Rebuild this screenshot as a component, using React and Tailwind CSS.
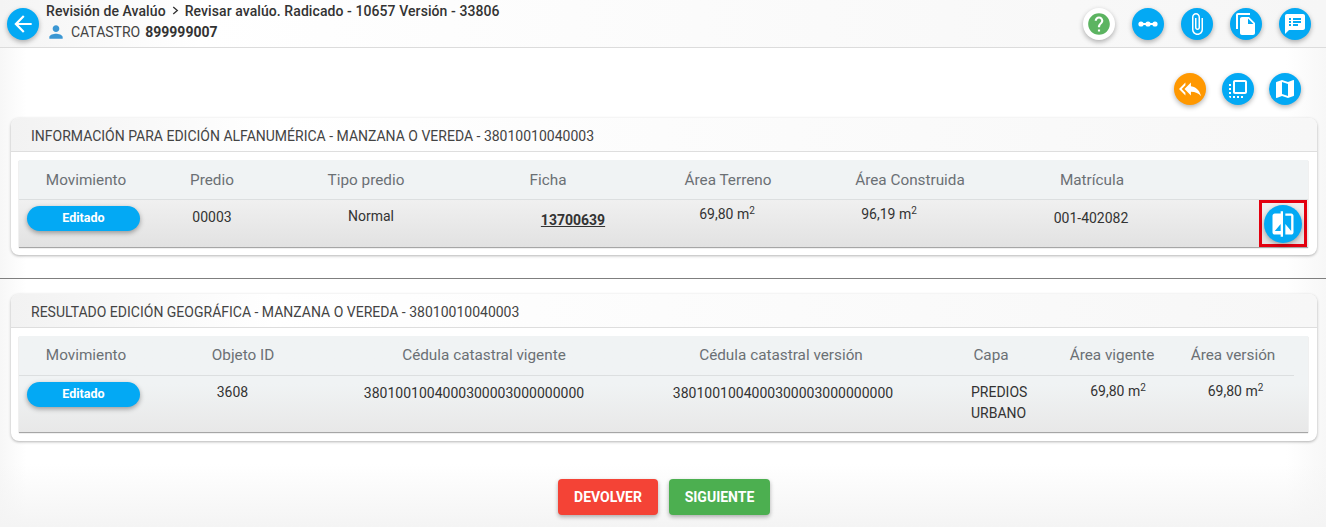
import React from "react";

const P = {
  back: "M20 11H7.83l5.59-5.59L12 4l-8 8 8 8 1.41-1.41L7.83 13H20v-2z",
  person: "M12 12c2.21 0 4-1.79 4-4s-1.79-4-4-4-4 1.79-4 4 1.79 4 4 4zm0 2c-2.67 0-8 1.34-8 4v2h16v-2c0-2.66-5.33-4-8-4z",
  attach: "M16.5 6v11.5c0 2.21-1.79 4-4 4s-4-1.79-4-4V5c0-1.38 1.12-2.5 2.5-2.5s2.5 1.12 2.5 2.5v10.5c0 .55-.45 1-1 1s-1-.45-1-1V6H10v9.5c0 1.38 1.12 2.5 2.5 2.5s2.5-1.12 2.5-2.5V5c0-2.21-1.79-4-4-4S7 2.79 7 5v12.5c0 3.04 2.46 5.5 5.5 5.5s5.5-2.46 5.5-5.5V6h-1.5z",
  copy: "M16 1H4c-1.1 0-2 .9-2 2v14h2V3h12V1zm-1 4l6 6v10c0 1.1-.9 2-2 2H7.99C6.89 23 6 22.1 6 21l.01-14c0-1.1.89-2 1.99-2h7zm-1 7h5.5L14 6.5V12z",
  notes: "M20 2H4c-1.1 0-1.99.9-1.99 2L2 22l4-4h14c1.1 0 2-.9 2-2V4c0-1.1-.9-2-2-2zM8 14H6v-2h2v2zm0-3H6V9h2v2zm0-3H6V6h2v2zm7 6h-5v-2h5v2zm3-3h-8V9h8v2zm0-3h-8V6h8v2z",
  replyAll: "M7 8V5l-7 7 7 7v-3l-4-4 4-4zm6 1V5l-7 7 7 7v-4.1c5 0 8.5 1.6 11 5.1-1-5-4-10-11-11z",
  flip: "M3 13h2v-2H3v2zm0 4h2v-2H3v2zm2 4v-2H3c0 1.1.89 2 2 2zM3 9h2V7H3v2zm12 12h2v-2h-2v2zm4-18H9c-1.11 0-2 .9-2 2v10c0 1.1.89 2 2 2h10c1.1 0 2-.9 2-2V5c0-1.1-.9-2-2-2zm0 12H9V5h10v10zm-8 6h2v-2h-2v2zm-4 0h2v-2H7v2z",
  map: "M20.5 3l-.16.03L15 5.1 9 3 3.36 4.9c-.21.07-.36.25-.36.48V20.5c0 .28.22.5.5.5l.16-.03L9 18.9l6 2.1 5.64-1.9c.21-.07.36-.25.36-.48V3.5c0-.28-.22-.5-.5-.5zM15 19l-6-2.11V5l6 2.11V19z",
  compare: "M10 3H5c-1.1 0-2 .9-2 2v14c0 1.1.9 2 2 2h5v2h2V1h-2v2zm0 15H5l5-6v6zm9-15h-5v2h5v13l-5-6v9h5c1.1 0 2-.9 2-2V5c0-1.1-.9-2-2-2z",
  help: "M12 2C6.48 2 2 6.48 2 12s4.48 10 10 10 10-4.48 10-10S17.52 2 12 2zm1 17h-2v-2h2v2zm2.07-7.75l-.9.92C13.45 12.9 13 13.5 13 15h-2v-.5c0-1.1.45-2.1 1.17-2.83l1.24-1.26c.37-.36.59-.86.59-1.41 0-1.1-.9-2-2-2s-2 .9-2 2H8c0-2.21 1.79-4 4-4s4 1.79 4 4c0 .88-.36 1.68-.93 2.25z",
};

function Icon({ d, className }) {
  return (
    <svg viewBox="0 0 24 24" className={className} fill="currentColor">
      <path d={d} />
    </svg>
  );
}

function Fab({ children, className = "h-8 w-8 bg-[#03a9f4] text-white" }) {
  return (
    <button className={"flex shrink-0 items-center justify-center rounded-full shadow-[0_2px_5px_rgba(0,0,0,0.3)] " + className}>
      {children}
    </button>
  );
}

function Sup({ value }) {
  return (
    <span>
      {value} m<sup className="text-[10px]">2</sup>
    </span>
  );
}

function Pill() {
  return (
    <button className="flex h-[25px] w-[113px] items-center justify-center rounded-full bg-[#03a9f4] text-[12.5px] font-bold text-white shadow-[0_2px_5px_rgba(0,0,0,0.35)]">
      Editado
    </button>
  );
}

function Card({ title, children, className = "" }) {
  return (
    <section className={"ml-[11px] mr-[9px] shrink-0 rounded-[8px] bg-white shadow-[0_1px_3px_rgba(0,0,0,0.3)] " + className}>
      <h2 className="flex h-[34px] items-center rounded-t-[8px] border-b border-[#dedede] bg-gradient-to-r from-[#f2f2f2] via-white via-20% to-[#f7f7f7] pl-5 pt-[3px] text-[14px] font-normal text-[#444]">
        {title}
      </h2>
      <div className="pb-2 pl-2 pr-[9px] pt-2">{children}</div>
    </section>
  );
}

export default function App() {
  return (
    <div className="flex h-[527px] w-[1326px] flex-col overflow-hidden bg-[linear-gradient(to_bottom,transparent_88%,#f4f4f4_100%),linear-gradient(to_right,#f7f7f7,#ffffff_2%,#ffffff_97%,#f7f7f7)] font-['Roboto',sans-serif] text-[14px]">
      <header className="flex h-12 shrink-0 items-center border-b border-[#dcdcdc] bg-gradient-to-r from-[#f4f4f4] via-white via-15% to-[#f6f6f6] pl-[7px] pr-[15px]">
        <Fab><Icon d={P.back} className="h-[26px] w-[26px]" /></Fab>
        <div className="ml-[7px] mt-[-5px] flex flex-col text-[#333]">
          <div className="flex h-5 items-center text-[14px] font-medium leading-5 tracking-[0.08px] text-[#333]">
            <span>Revisión de Avalúo</span>
            <svg viewBox="0 0 10 10" className="mx-[5px] h-[9px] w-[9px]" fill="none" stroke="currentColor" strokeWidth="1.5"><path d="M2.5 1 L7 5 L2.5 9" /></svg>
            <span>Revisar avalúo. Radicado - 10657 Versión - 33806</span>
          </div>
          <div className="mt-[1px] flex h-5 items-center text-[14px] leading-5">
            <Icon d={P.person} className="h-5 w-5 text-[#3b97d3]" />
            <span className="ml-[5px] text-[#444]">CATASTRO</span>
            <span className="ml-[5px] font-bold text-[#333]">899999007</span>
          </div>
        </div>
        <div className="ml-auto flex gap-[17px]">
          <Fab className="h-8 w-8 bg-white text-[#5cb461]"><Icon d={P.help} className="h-[26px] w-[26px]" /></Fab>
          <Fab>
            <svg viewBox="0 0 24 24" className="h-[24px] w-[24px]" fill="currentColor">
              <rect x="4" y="11" width="16" height="2" />
              <circle cx="5" cy="12" r="2.6" />
              <circle cx="12" cy="12" r="2.6" />
              <circle cx="19" cy="12" r="2.6" />
            </svg>
          </Fab>
          <Fab><Icon d={P.attach} className="h-[24px] w-[24px]" /></Fab>
          <Fab><Icon d={P.copy} className="h-[24px] w-[24px]" /></Fab>
          <Fab><Icon d={P.notes} className="h-[24px] w-[24px]" /></Fab>
        </div>
      </header>

      <div className="mt-[25px] flex shrink-0 justify-end gap-[15.5px] pr-[25px]">
        <Fab className="h-8 w-8 bg-[#ff9800] text-white"><Icon d={P.replyAll} className="h-[22px] w-[24px]" /></Fab>
        <Fab><Icon d={P.flip} className="h-[24px] w-[24px]" /></Fab>
        <Fab><Icon d={P.map} className="h-[24px] w-[24px]" /></Fab>
      </div>

      <Card title="INFORMACIÓN PARA EDICIÓN ALFANUMÉRICA - MANZANA O VEREDA - 38010010040003" className="mt-[13px] h-[137px]">
        <div className="h-[87px] shadow-[0_1px_1px_rgba(0,0,0,0.35)]">
          <div className="grid h-[40px] grid-cols-[134px_118px_190px_174px_186px_178px_186px_1fr] items-center border-b border-[#dcdfe0] bg-[#f0f3f4] pt-[1px] text-center text-[15.3px] font-normal text-[#6b7074]">
            <div>Movimiento</div>
            <div>Predio</div>
            <div>Tipo predio</div>
            <div>Ficha</div>
            <div>Área Terreno</div>
            <div>Área Construida</div>
            <div>Matrícula</div>
            <div />
          </div>
          <div className="grid h-[47px] grid-cols-[128px_130px_188px_216px_92px_232px_172px_1fr] bg-gradient-to-b from-[#f0f0f0] to-[#e2e2e2] text-center text-[14px] text-[#333]">
            <div className="pl-2 pt-[6px]"><Pill /></div>
            <div className="pt-[7px]">00003</div>
            <div className="pt-[6px]">Normal</div>
            <div className="pt-[10px] font-bold underline">13700639</div>
            <div className="pt-[4px]"><Sup value="69,80" /></div>
            <div className="pt-[4px]"><Sup value="96,19" /></div>
            <div className="pt-[8px]">001-402082</div>
            <div className="flex justify-end pr-[1px]">
              <div className="flex h-[47px] w-[48px] items-center justify-center border-[3px] border-[#e3000f]">
                <Fab className="h-[38px] w-[38px] bg-[#03a9f4] text-white"><Icon d={P.compare} className="h-[28px] w-[28px]" /></Fab>
              </div>
            </div>
          </div>
        </div>
      </Card>

      <div className="mt-[23px] h-px shrink-0 bg-[#7f7f7f]" />

      <Card title="RESULTADO EDICIÓN GEOGRÁFICA - MANZANA O VEREDA - 38010010040003" className="mt-[15px] h-[147px]">
        <div className="h-[96px] bg-gradient-to-b from-[#f0f3f4] from-50% to-[#e8e8e8] shadow-[0_1px_1px_rgba(0,0,0,0.35)]">
          <div className="mr-[14px] grid h-[40px] grid-cols-[134px_180px_302px_292px_125px_120px_1fr] items-center border-b border-[#dcdfe0] text-center text-[15.3px] font-normal text-[#6b7074]">
            <div>Movimiento</div>
            <div>Objeto ID</div>
            <div>Cédula catastral vigente</div>
            <div>Cédula catastral versión</div>
            <div className="pl-[3px]">Capa</div>
            <div>Área vigente</div>
            <div>Área versión</div>
          </div>
          <div className="mr-[14px] grid grid-cols-[128px_170px_314px_304px_128px_110px_1fr] text-center text-[14px] text-[#333]">
            <div className="pl-2 pt-[6px]"><Pill /></div>
            <div className="pl-[1px] pt-[6px]">3608</div>
            <div className="pt-[7px]">3801001004000300003000000000</div>
            <div className="pt-[7px]">3801001004000300003000000000</div>
            <div className="pl-[36px] pt-[6px] text-left leading-[21px]">PREDIOS<br />URBANO</div>
            <div className="pt-[5px]"><Sup value="69,80" /></div>
            <div className="pl-1 pt-[5px]"><Sup value="69,80" /></div>
          </div>
        </div>
      </Card>

      <div className="mt-[38px] flex justify-center gap-[11px] pl-[2px]">
        <button className="flex h-9 w-[100px] items-center justify-center rounded-[4px] bg-[#f44336] text-[14px] font-bold text-white shadow-[0_2px_4px_rgba(0,0,0,0.3)]">DEVOLVER</button>
        <button className="flex h-9 w-[101px] items-center justify-center rounded-[4px] bg-[#4caf50] text-[14px] font-bold text-white shadow-[0_2px_4px_rgba(0,0,0,0.3)]">SIGUIENTE</button>
      </div>
    </div>
  );
}
